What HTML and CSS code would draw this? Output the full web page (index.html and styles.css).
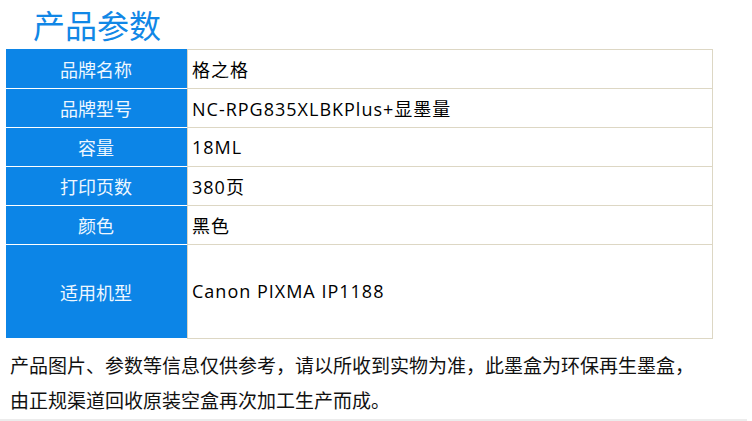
FILE: index.html
```html
<!DOCTYPE html>
<html lang="zh">
<head>
<meta charset="utf-8">
<link rel="stylesheet" href="styles.css">
</head>
<body>
<div class="page">
  <h1 class="title">产品参数</h1>
  <div class="params">
    <div class="label first">品牌名称</div><div class="value first">格之格</div>
    <div class="label">品牌型号</div><div class="value">NC-RPG835XLBKPlus+显墨量</div>
    <div class="label">容量</div><div class="value">18ML</div>
    <div class="label">打印页数</div><div class="value">380页</div>
    <div class="label">颜色</div><div class="value">黑色</div>
    <div class="label tall last">适用机型</div><div class="value tall">Canon PIXMA IP1188</div>
  </div>
  <p class="note">产品图片、参数等信息仅供参考，请以所收到实物为准，此墨盒为环保再生墨盒，由正规渠道回收原装空盒再次加工生产而成。</p>
</div>
<div class="bar"></div>
</body>
</html>
```

FILE: styles.css
```css
html, body {
  margin: 0;
  padding: 0;
  background: #fff;
}
body {
  width: 752px;
  height: 421px;
  overflow: hidden;
  font-family: "Noto Sans CJK SC", "Noto Sans", sans-serif;
  color: #000;
}
.page {
  padding: 0 0 0 6px;
  height: 419px;
}
.title {
  margin: 0;
  height: 49px;
  line-height: 49px;
  padding-left: 27px;
  font-size: 32px;
  font-weight: normal;
  color: #1187e6;
}
.params {
  display: grid;
  grid-template-columns: 181px 526px;
  width: 707px;
}
.label {
  height: 38px;
  background: #0c85e7;
  border-bottom: 1px solid #fff;
  color: #eef7ff;
  font-size: 18px;
  display: flex;
  align-items: center;
  justify-content: center;
  padding-right: 1px;
}
.label.first {
  border-top: 1px solid #0c85e7;
}
.value {
  height: 38px;
  border-left: 1px solid #ddd7c4;
  border-right: 1px solid #ddd7c4;
  border-bottom: 1px solid #ddd7c4;
  font-family: "Open Sans", "Noto Sans CJK SC", sans-serif;
  font-size: 18px;
  letter-spacing: 1px;
  display: flex;
  align-items: center;
  padding-left: 4px;
  padding-bottom: 1px;
  box-sizing: content-box;
}
.value.first {
  border-top: 1px solid #ddd7c4;
}
.value {
  height: 37px;
}
.label.tall {
  height: 93px;
}
.value.tall {
  height: 92px;
}
.note {
  margin: 8px 0 0 4px;
  width: 700px;
  font-size: 19px;
  line-height: 35px;
  color: #111;
}
.bar {
  width: 747px;
  height: 2px;
  background: #ececec;
}
```
